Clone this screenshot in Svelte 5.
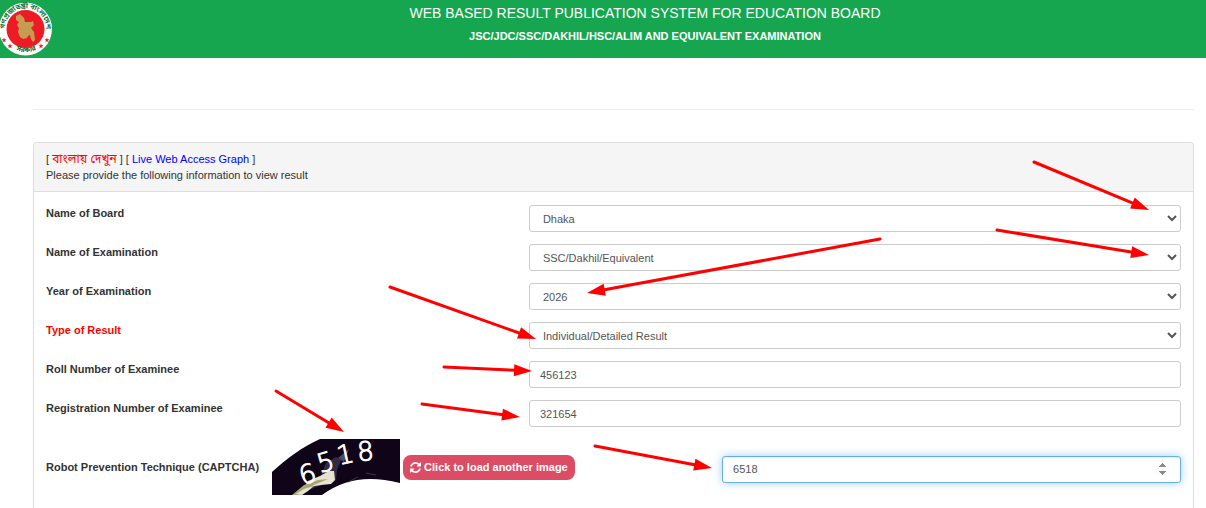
<script lang="ts">
	const boards = ['Dhaka', 'Barisal', 'Chittagong', 'Comilla', 'Rajshahi'];
	const exams = ['SSC/Dakhil/Equivalent', 'JSC/JDC', 'HSC/Alim'];
	const years = ['2026', '2025', '2024', '2023'];
	const types = ['Individual/Detailed Result', 'Institution Result'];

	let board = $state(boards[0]);
	let exam = $state(exams[0]);
	let year = $state(years[0]);
	let type = $state(types[0]);
	let roll = $state('456123');
	let registration = $state('321654');
	let captcha = $state(6518);

	// tail and tip of every pointer
	const arrows = [
		[1034, 162, 1149, 210],
		[997, 230, 1149, 255],
		[880, 239, 587, 293],
		[390, 287, 536, 339],
		[444, 367, 532, 371],
		[422, 404, 520, 417],
		[276, 391, 344, 432],
		[595, 446, 712, 468]
	].map(([x1, y1, x2, y2]) => ({
		x: x2,
		y: y2,
		length: Math.hypot(x2 - x1, y2 - y1),
		angle: (Math.atan2(y2 - y1, x2 - x1) * 180) / Math.PI
	}));
</script>

{#snippet options(items: string[])}
	{#each items as item}
		<option value={item}>{item}</option>
	{/each}
{/snippet}

<div class="page">
	<header class="banner">
		<svg class="logo" width="52" height="54" viewBox="0 0 52 54" aria-hidden="true">
			<defs>
				<path id="arc-top" d="M6 33 A20.5 20.5 0 1 1 45 33" />
				<path id="arc-bottom" d="M9 43 A24 24 0 0 0 43 43" />
			</defs>
			<circle cx="25.500" cy="27" r="26.500" fill="#fff" />
			<circle cx="25.500" cy="27" r="19" fill="#ed1c24" />
			<path
				d="M16 14L20 12L24 16L25 20L31 20L33 19L34 23L31 26L34 30L35 38L33 40L31 37L30 33L28 34L27 36L23 37L20 35L18 30L19 26L17 23L19 20L16 18z"
				fill="#c69c52"
			/>
			<text class="seal" fill="#16703a">
				<textPath href="#arc-top" startOffset="50%" text-anchor="middle">গণপ্রজাতন্ত্রী বাংলাদেশ</textPath>
			</text>
			<text class="seal" fill="#16703a">
				<textPath href="#arc-bottom" startOffset="50%" text-anchor="middle">সরকার</textPath>
			</text>
			{#each [[4, 38], [10, 44], [47, 38], [41, 44]] as [x, y]}
				<path
					d="M0-2.500l.7 1.700h1.800l-1.400 1.200.5 1.900L0 1.300l-1.600 1 .5-1.900-1.400-1.200h1.800z"
					transform="translate({x} {y})"
					fill="#ed1c24"
				/>
			{/each}
		</svg>
		<div class="titles">
			<h1>WEB BASED RESULT PUBLICATION SYSTEM FOR EDUCATION BOARD</h1>
			<h2>JSC/JDC/SSC/DAKHIL/HSC/ALIM AND EQUIVALENT EXAMINATION</h2>
		</div>
	</header>

	<main>
		<hr />
		<section class="panel">
			<div class="panel-heading">
				<div>[ <a class="bangla" href="#bn">বাংলায় দেখুন</a> ] [ <a href="#graph">Live Web Access Graph</a> ]</div>
				<div>Please provide the following information to view result</div>
			</div>

			<form class="panel-body">
				<div class="row">
					<label for="board">Name of Board</label>
					<div class="field"><select id="board" bind:value={board}>{@render options(boards)}</select></div>
				</div>
				<div class="row">
					<label for="exam">Name of Examination</label>
					<div class="field"><select id="exam" bind:value={exam}>{@render options(exams)}</select></div>
				</div>
				<div class="row">
					<label for="year">Year of Examination</label>
					<div class="field"><select id="year" bind:value={year}>{@render options(years)}</select></div>
				</div>
				<div class="row">
					<label class="required" for="type">Type of Result</label>
					<div class="field"><select id="type" bind:value={type}>{@render options(types)}</select></div>
				</div>
				<div class="row">
					<label for="roll">Roll Number of Examinee</label>
					<div class="field"><input id="roll" type="text" bind:value={roll} /></div>
				</div>
				<div class="row">
					<label for="reg">Registration Number of Examinee</label>
					<div class="field"><input id="reg" type="text" bind:value={registration} /></div>
				</div>

				<div class="row captcha-row">
					<div class="captcha">
						<label for="captcha">Robot Prevention Technique (CAPTCHA)</label>
						<svg class="captcha-image" width="128" height="56" viewBox="0 0 128 56" role="img" aria-label="Captcha">
							<rect width="128" height="56" fill="#fff" />
							<path d="M48 0H128V44C96 36 72 40 50 56H0V33C14 20 30 8 48 0z" fill="#100518" />
							<path d="M30 50l18-11 6-15 10-6 5 3-4 10-1 10-17 6-15 6z" fill="#62648c" opacity=".4" />
							<path d="M36 42l12-5 9-5 5 0 1 9-4 4-10 1-12 2-6 2z" fill="#e6e3ce" />
							<path d="M20 56l12-10 14-5 10-1-14 6-14 10z" fill="#aba37a" />
							<path d="M24 55l8-5 10-3-6 5-6 4z" fill="#e6e3ce" />
							<path d="M66 19l11-9-5 13z" fill="#797690" opacity=".6" />
							<path d="M76 43l10-5M94 34l10 2" stroke="#3c3348" fill="none" />
							<g class="digits">
								<text transform="translate(30 46) rotate(-16)">6</text>
								<text transform="translate(48 34) rotate(-16)">5</text>
								<text transform="translate(67 26) rotate(-12)">1</text>
								<text transform="translate(86 22) rotate(-5)">8</text>
							</g>
						</svg>
						<button type="button" class="reload">
							<svg width="11" height="11" viewBox="0 0 1536 1536" fill="currentColor" aria-hidden="true">
								<path
									d="M1511 928q0 5-1 7-64 268-268 434.500T764 1536q-146 0-282.500-55T238 1324l-129 129q-19 19-45 19t-45-19-19-45V960q0-26 19-45t45-19h448q26 0 45 19t19 45-19 45l-137 137q71 66 161 102t187 36q134 0 250-65t186-179q11-17 53-117 8-23 30-23h192q13 0 22.500 9.500t9.500 22.500zm25-800v448q0 26-19 45t-45 19h-448q-26 0-45-19t-19-45 19-45l138-138Q969 256 768 256q-134 0-250 65T332 500q-11 17-53 117-8 23-30 23H50q-13 0-22.500-9.500T18 608v-7q65-268 270-434.500T768 0q146 0 284 55.500T1297 212l130-129q19-19 45-19t45 19 19 45z"
								/>
							</svg>
							Click to load another image
						</button>
					</div>
					<div class="field"><input id="captcha" class="active" type="number" bind:value={captcha} /></div>
				</div>
			</form>
		</section>
	</main>

	<svg class="pointers" viewBox="0 0 1206 508" aria-hidden="true">
		{#each arrows as arrow}
			<g transform="translate({arrow.x} {arrow.y}) rotate({arrow.angle})">
				<line x1={-arrow.length} x2="-15" y1="0" y2="0" />
				<path d="M0 0L-18-6V6z" />
			</g>
		{/each}
	</svg>
</div>

<style>
	:global(body) {
		margin: 0;
		background: #fff;
	}

	.page {
		position: relative;
		display: flex;
		flex-direction: column;
		min-height: 100vh;
		box-sizing: border-box;
		font-family: 'Liberation Sans', Arial, 'Noto Sans Bengali', sans-serif;
		font-size: 11px;
		line-height: 16px;
		color: #333;
	}

	.banner {
		display: grid;
		grid-template-columns: 52px 1fr;
		height: 58px;
		background: #16a64f;
		color: #fff;
	}

	.logo {
		margin-top: 2px;
	}

	.seal {
		font-size: 7px;
		font-weight: bold;
	}

	.titles {
		padding: 3px 0 0 32px;
		text-align: center;
	}

	h1,
	h2 {
		margin: 0;
	}

	h1 {
		font-size: 14px;
		font-weight: normal;
		line-height: 20px;
	}

	h2 {
		margin-top: 5px;
		font-size: 11px;
		line-height: 16px;
	}

	main {
		flex: 1;
		display: flex;
		flex-direction: column;
		padding: 51px 12px 0 33px;
	}

	hr {
		width: 100%;
		margin: 0 0 32px;
		border: 0;
		border-top: 1px solid #eee;
	}

	.panel {
		flex: 1;
		border: 1px solid #ddd;
		border-bottom: 0;
		border-radius: 4px 4px 0 0;
	}

	.panel-heading {
		padding: 8px 12px;
		background: #f5f5f5;
		border-bottom: 1px solid #ddd;
		border-radius: 3px 3px 0 0;
	}

	.panel-heading a {
		color: #00f;
		text-decoration: none;
	}

	.panel-heading .bangla {
		color: #f00;
		font-size: 12px;
		line-height: 1;
	}

	.panel-body {
		display: flex;
		flex-direction: column;
		gap: 12px;
		padding: 13px 0 12px;
	}

	.row {
		display: grid;
		grid-template-columns: 5fr 7fr;
	}

	.row > * {
		padding: 0 12px;
		min-width: 0;
	}

	label {
		font-weight: bold;
	}

	.required {
		color: #f00;
	}

	select,
	input {
		display: block;
		width: 100%;
		height: 27px;
		box-sizing: border-box;
		padding: 0 10px;
		border: 1px solid #ccc;
		border-radius: 3px;
		background: #fff;
		color: #555;
		font: inherit;
		outline: none;
	}

	select {
		padding: 0 4px 0 9px;
	}

	.captcha-row {
		grid-template-columns: 7fr 5fr;
		align-items: center;
	}

	.captcha-row .field {
		padding-top: 4px;
	}

	.captcha {
		display: flex;
		align-items: center;
	}

	.captcha label {
		margin-right: 13px;
	}

	.captcha-image {
		margin-right: 3px;
		overflow: visible;
	}

	.digits {
		font-family: 'DejaVu Sans Light', 'DejaVu Sans', sans-serif;
		font-size: 26px;
		font-weight: 200;
		fill: #fff;
		stroke: #fff;
		stroke-width: 1px;
	}

	.reload {
		display: flex;
		align-items: center;
		gap: 3px;
		height: 25px;
		padding: 0 7px;
		border: 0;
		border-radius: 8px;
		background: #dc4c64;
		color: #fff;
		font: inherit;
		font-weight: bold;
		cursor: pointer;
	}

	.active {
		border-color: #66afe9;
		box-shadow:
			inset 0 1px 1px rgba(0, 0, 0, 0.08),
			0 0 8px rgba(102, 175, 233, 0.6);
	}

	.active::-webkit-inner-spin-button {
		opacity: 1;
	}

	.pointers {
		position: absolute;
		top: 0;
		left: 0;
		width: 100%;
		fill: #f00;
		stroke: #f00;
		pointer-events: none;
	}

	.pointers line {
		stroke-width: 3;
		stroke-linecap: round;
	}

	.pointers path {
		stroke: none;
	}
</style>
